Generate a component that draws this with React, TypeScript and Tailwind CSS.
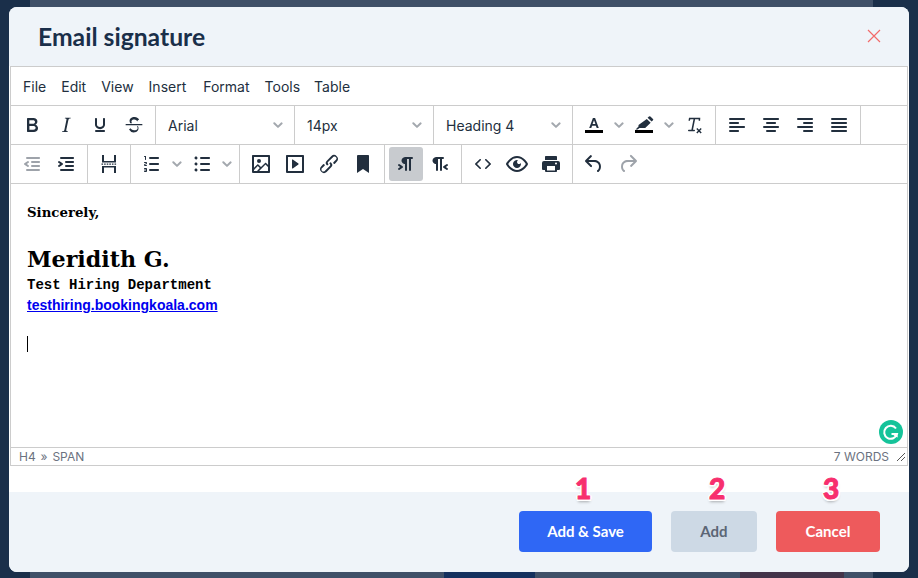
import { ReactNode } from "react";

const DARK = "#222f3e";

function Chevron() {
  return (
    <svg width="10" height="6" viewBox="0 0 10 6" className="block">
      <path d="M.6.6a1 1 0 0 1 1.4 0L5 3.6 8 .6a1 1 0 0 1 1.4 1.4L5.7 5.6a1 1 0 0 1-1.4 0L.6 2A1 1 0 0 1 .6.6z" fill="#a3a8ae" />
    </svg>
  );
}

function Icon({ d, color = DARK, bar }: { d: string; color?: string; bar?: boolean }) {
  return (
    <svg width="24" height="24" viewBox="0 0 24 24">
      <path d={d} fill={color} fillRule="evenodd" />
      {bar && <rect x="3" y="17" width="18" height="3" fill="#000" />}
    </svg>
  );
}

function Btn({ children, active }: { children: ReactNode; active?: boolean }) {
  return (
    <div className={`flex h-[34px] w-[34px] shrink-0 items-center justify-center rounded-[3px] ${active ? "bg-[#c8cbcf]" : ""}`}>
      {children}
    </div>
  );
}

function Split({ children }: { children: ReactNode }) {
  return (
    <div className="flex items-center">
      <Btn>{children}</Btn>
      <div className="flex h-[34px] w-[16px] items-center justify-center">
        <Chevron />
      </div>
    </div>
  );
}

function Group({ children, w }: { children: ReactNode; w: string }) {
  return <div className={`flex h-full shrink-0 items-center border-r border-[#ccc] pl-1 ${w}`}>{children}</div>;
}

function Select({ label }: { label: string }) {
  return (
    <div className="flex h-full w-[139px] shrink-0 items-center justify-between border-r border-[#ccc] pl-[12px] pr-[11px] text-[14px] text-[#222f3e]">
      <span>{label}</span>
      <Chevron />
    </div>
  );
}

const icons = {
  bold: "M7.8 19c-.3 0-.5 0-.6-.2l-.2-.5V5.7c0-.2 0-.4.2-.5l.6-.2h5c1.5 0 2.7.3 3.5 1 .7.6 1.1 1.4 1.1 2.5a3 3 0 0 1-.6 1.9c-.4.6-1 1-1.6 1.2.4.1.9.3 1.3.6s.8.7 1 1.2c.4.4.5 1 .5 1.6 0 1.3-.4 2.3-1.3 3-.8.7-2.1 1-3.8 1H7.8zm5-8.3c.6 0 1.2-.1 1.6-.5.4-.3.6-.7.6-1.3 0-1.1-.8-1.7-2.3-1.7H9.3v3.5h3.4zm.5 6c.7 0 1.3-.1 1.7-.4.4-.4.6-.9.6-1.5s-.2-1-.7-1.4c-.4-.3-1-.4-2-.4H9.4v3.8h4z",
  italic: "M16.7 4.7l-.1.9h-.3c-.6 0-1 0-1.4.3-.3.3-.4.6-.5 1.1l-2.1 9.8v.6c0 .5.4.8 1.4.8h.2l-.2.8H8l.2-.8h.2c1.1 0 1.8-.5 2-1.5l2-9.8.1-.5c0-.6-.4-.8-1.4-.8h-.3l.2-.9h5.8z",
  underline: "M16 5c.6 0 1 .4 1 1v5.5a4 4 0 0 1-.4 1.8l-1 1.4a5.3 5.3 0 0 1-5.5 1 5 5 0 0 1-1.6-1c-.5-.4-.8-.9-1.1-1.4a4 4 0 0 1-.4-1.8V6c0-.6.4-1 1-1s1 .4 1 1v5.5c0 .3 0 .6.2 1l.6.7a3.3 3.3 0 0 0 2.2.8 3.4 3.4 0 0 0 2.2-.8c.3-.2.4-.5.6-.8l.2-.9V6c0-.6.4-1 1-1zM8 17h8c.6 0 1 .4 1 1s-.4 1-1 1H8a1 1 0 0 1 0-2z",
  strike: "M15.6 8.5c-.5-.7-1-1.1-1.3-1.3-.6-.4-1.3-.6-2-.6-2.7 0-2.8 1.7-2.8 2.1 0 .6.2 1.1.6 1.5H8.3a3.5 3.5 0 0 1-.7-2c0-1.4.7-4.1 5-4.1 1.1 0 2.1.3 3 .8.7.4 1.2 1 1.6 1.7l-1.6.8zM4 11h16a.7.7 0 0 1 0 1.3H4A.7.7 0 0 1 4 11zm12 2.3c.4.7.5 1.4.5 2 0 1.4-.7 4.1-5 4.1A6.2 6.2 0 0 1 7 16.4l1.5-1.1c.4.6 1.6 2 3.7 2 1.6 0 2.5-.4 3-1 .3-.4.4-.9.4-1.3 0-.7-.3-1.2-.8-1.7H16z",
  outdent: "M7 5h12c.6 0 1 .4 1 1s-.4 1-1 1H7a1 1 0 1 1 0-2zm5 4h7c.6 0 1 .4 1 1s-.4 1-1 1h-7a1 1 0 0 1 0-2zm0 4h7c.6 0 1 .4 1 1s-.4 1-1 1h-7a1 1 0 0 1 0-2zm-5 4h12a1 1 0 0 1 0 2H7a1 1 0 0 1 0-2zm1.6-3.8a1 1 0 0 1-1.2 1.6l-3-2a1 1 0 0 1 0-1.6l3-2a1 1 0 0 1 1.2 1.6L6.8 12l1.8 1.2z",
  indent: "M7 5h12c.6 0 1 .4 1 1s-.4 1-1 1H7a1 1 0 1 1 0-2zm5 4h7c.6 0 1 .4 1 1s-.4 1-1 1h-7a1 1 0 0 1 0-2zm0 4h7c.6 0 1 .4 1 1s-.4 1-1 1h-7a1 1 0 0 1 0-2zm-5 4h12a1 1 0 0 1 0 2H7a1 1 0 0 1 0-2zm-2.6-3.8L6.2 12l-1.8-1.2a1 1 0 0 1 1.2-1.6l3 2a1 1 0 0 1 0 1.6l-3 2a1 1 0 1 1-1.2-1.6z",
  pagebreak: "M5 3h2v6h10V3h2v7.5H5zM5 14h14v7h-2v-5.5H7V21H5zM4.5 11.6h1.6v1.2H4.5zm2.6 0h1.6v1.2H7.1zm2.6 0h1.6v1.2H9.7zm2.6 0h1.6v1.2h-1.6zm2.6 0h1.6v1.2h-1.6zm2.6 0h1.6v1.2h-1.6z",
  numlist: "M10 17h8c.6 0 1 .4 1 1s-.4 1-1 1h-8a1 1 0 0 1 0-2zm0-6h8c.6 0 1 .4 1 1s-.4 1-1 1h-8a1 1 0 0 1 0-2zm0-6h8c.6 0 1 .4 1 1s-.4 1-1 1h-8a1 1 0 1 1 0-2zM6 4v3.5c0 .3-.2.5-.5.5a.5.5 0 0 1-.5-.5V5h-.5a.5.5 0 0 1 0-1H6zm-1 8.8l.2.2h1.3c.3 0 .5.2.5.5s-.2.5-.5.5H4.9a1 1 0 0 1-.9-1V13c0-.4.3-.8.6-1l1.2-.4.2-.3a.2.2 0 0 0-.2-.2H4.5a.5.5 0 0 1-.5-.5c0-.3.2-.5.5-.5h1.6c.5 0 .9.4.9 1v.1c0 .4-.3.8-.6 1l-1.2.4-.2.3zM7 17v2c0 .6-.4 1-1 1H4.5a.5.5 0 0 1 0-1h1.2c.2 0 .3-.1.3-.3 0-.2-.1-.3-.3-.3H4.4a.4.4 0 1 1 0-.8h1.3c.2 0 .3-.1.3-.3 0-.2-.1-.3-.3-.3H4.5a.5.5 0 1 1 0-1H6c.6 0 1 .4 1 1z",
  bullist: "M11 5h8c.6 0 1 .4 1 1s-.4 1-1 1h-8a1 1 0 0 1 0-2zm0 6h8c.6 0 1 .4 1 1s-.4 1-1 1h-8a1 1 0 0 1 0-2zm0 6h8c.6 0 1 .4 1 1s-.4 1-1 1h-8a1 1 0 0 1 0-2zM4.5 6c0-.4.1-.8.4-1 .3-.4.7-.5 1.1-.5.4 0 .8.1 1 .4.4.3.5.7.5 1.1 0 .4-.1.8-.4 1-.3.4-.7.5-1.1.5-.4 0-.8-.1-1-.4-.4-.3-.5-.7-.5-1.1zm0 6c0-.4.1-.8.4-1 .3-.4.7-.5 1.1-.5.4 0 .8.1 1 .4.4.3.5.7.5 1.1 0 .4-.1.8-.4 1-.3.4-.7.5-1.1.5-.4 0-.8-.1-1-.4-.4-.3-.5-.7-.5-1.1zm0 6c0-.4.1-.8.4-1 .3-.4.7-.5 1.1-.5.4 0 .8.1 1 .4.4.3.5.7.5 1.1 0 .4-.1.8-.4 1-.3.4-.7.5-1.1.5-.4 0-.8-.1-1-.4-.4-.3-.5-.7-.5-1.1z",
  image: "M5 15.7l3.3-3.2c.3-.3.7-.3 1 0L12 15l4.1-4c.3-.4.8-.4 1 0l2 1.9V5H5v10.7zM5 18V19h3l2.8-2.9-2-2L5 17.9zm14-3l-2.5-2.4-6.4 6.5H19v-4zM4 3h16c.6 0 1 .4 1 1v16c0 .6-.4 1-1 1H4a1 1 0 0 1-1-1V4c0-.6.4-1 1-1zm6 8a2 2 0 1 0 0-4 2 2 0 0 0 0 4z",
  media: "M4 3h16c.6 0 1 .4 1 1v16c0 .6-.4 1-1 1H4a1 1 0 0 1-1-1V4c0-.6.4-1 1-1zm1 2v14h14V5H5zm4.8 2.6l5.6 4a.5.5 0 0 1 0 .8l-5.6 4A.5.5 0 0 1 9 16V8a.5.5 0 0 1 .8-.4z",
  link: "M6.2 12.3a1 1 0 0 1 1.4 1.4l-2.1 2.1a2 2 0 1 0 2.7 2.7l4.8-4.8a1 1 0 0 0 0-1.4 1 1 0 1 1 1.4-1.3 2.9 2.9 0 0 1 0 4L9.6 20a3.9 3.9 0 0 1-5.5-5.5l2-2.2zm11.6-.6a1 1 0 0 1-1.4-1.4l2-2a2 2 0 1 0-2.6-2.8L11 10a1 1 0 0 0 0 1.4A1 1 0 1 1 9.6 13a2.9 2.9 0 0 1 0-4L14.4 4a3.9 3.9 0 0 1 5.5 5.5l-2 2.2z",
  bookmark: "M6 4v17l6-4 6 4V4c0-.6-.4-1-1-1H7a1 1 0 0 0-1 1z",
  ltr: "M11 5h7a1 1 0 0 1 0 2h-1v11a1 1 0 0 1-2 0V7h-2v11a1 1 0 0 1-2 0v-6c-.5 0-1 0-1.4-.3A3.4 3.4 0 0 1 7.8 10a3.3 3.3 0 0 1 0-2.8 3.4 3.4 0 0 1 1.8-1.8L11 5zM4.4 16.2L6.2 15l-1.8-1.2a1 1 0 0 1 1.2-1.6l3 2a1 1 0 0 1 0 1.6l-3 2a1 1 0 1 1-1.2-1.6z",
  rtl: "M8 5h7a1 1 0 0 1 0 2h-1v11a1 1 0 0 1-2 0V7h-2v11a1 1 0 0 1-2 0v-6c-.5 0-1 0-1.4-.3A3.4 3.4 0 0 1 4.8 10a3.3 3.3 0 0 1 0-2.8 3.4 3.4 0 0 1 1.8-1.8L8 5zM19.6 13.8L17.8 15l1.8 1.2a1 1 0 1 1-1.2 1.6l-3-2a1 1 0 0 1 0-1.6l3-2a1 1 0 0 1 1.2 1.6z",
  code: "M9.8 15.7c.3.3.3.8 0 1-.3.4-.9.4-1.2 0l-4.4-4.1a.8.8 0 0 1 0-1.2l4.4-4.2c.3-.3.9-.3 1.2 0 .3.3.3.8 0 1.1L6 12l3.8 3.7zm4.4 0l3.8-3.7-3.8-3.7a.8.8 0 0 1 0-1.1c.3-.3.9-.3 1.2 0l4.4 4.2c.3.3.3.9 0 1.2l-4.4 4.1c-.3.4-.9.4-1.2 0a.8.8 0 0 1 0-1z",
  preview: "M3.5 12.5c.5.8 1.1 1.6 1.8 2.3 2 2 4.2 3.2 6.7 3.2s4.7-1.2 6.7-3.2a16.2 16.2 0 0 0 2.1-2.8 15.7 15.7 0 0 0-2.1-2.8c-2-2-4.2-3.2-6.7-3.2a9.3 9.3 0 0 0-6.7 3.2A16.2 16.2 0 0 0 3.2 12c0 .2.2.3.3.5zm-2.4-1l.7-1.2L4 7.8C6.2 5.4 8.9 4 12 4c3 0 5.8 1.4 8.1 3.8a18.2 18.2 0 0 1 2.8 3.7v1l-.7 1.2-2.1 2.5c-2.3 2.4-5 3.8-8.1 3.8-3 0-5.8-1.4-8.1-3.8a18.2 18.2 0 0 1-2.8-3.7 1 1 0 0 1 0-1zm12-3.3a2 2 0 1 0 2.7 2.7 4 4 0 1 1-2.7-2.7z",
  print: "M18 8H6V5c0-.6.4-1 1-1h10c.6 0 1 .4 1 1v3zM5 9h14a2 2 0 0 1 2 2v6a1 1 0 0 1-1 1h-2v1c0 .6-.4 1-1 1H7a1 1 0 0 1-1-1v-1H4a1 1 0 0 1-1-1v-6a2 2 0 0 1 2-2zm3 5v4.5h8V14H8zm9-3.5a1 1 0 1 0 0 2 1 1 0 0 0 0-2z",
  undo: "M6.4 8H12c3.7 0 6.2 2 6.8 5.1.6 2.7-.4 5.6-2.3 6.8a1 1 0 0 1-1-1.8c1.1-.6 1.8-2.7 1.4-4.6-.5-2.1-2.1-3.5-4.9-3.5H6.4l3.3 3.3a1 1 0 1 1-1.4 1.4l-5-5a1 1 0 0 1 0-1.4l5-5a1 1 0 0 1 1.4 1.4L6.4 8z",
  redo: "M17.6 10H12c-2.8 0-4.4 1.4-4.9 3.5-.4 2 .3 4 1.4 4.6a1 1 0 1 1-1 1.8c-2-1.2-2.9-4.1-2.3-6.8.6-3 3-5.1 6.8-5.1h5.6l-3.3-3.3a1 1 0 1 1 1.4-1.4l5 5a1 1 0 0 1 0 1.4l-5 5a1 1 0 0 1-1.4-1.4l3.3-3.3z",
  alignLeft: "M5 5h14c.6 0 1 .4 1 1s-.4 1-1 1H5a1 1 0 1 1 0-2zm0 4h8c.6 0 1 .4 1 1s-.4 1-1 1H5a1 1 0 1 1 0-2zm0 8h8c.6 0 1 .4 1 1s-.4 1-1 1H5a1 1 0 0 1 0-2zm0-4h14c.6 0 1 .4 1 1s-.4 1-1 1H5a1 1 0 0 1 0-2z",
  alignCenter: "M5 5h14c.6 0 1 .4 1 1s-.4 1-1 1H5a1 1 0 1 1 0-2zm3 4h8c.6 0 1 .4 1 1s-.4 1-1 1H8a1 1 0 1 1 0-2zm0 8h8c.6 0 1 .4 1 1s-.4 1-1 1H8a1 1 0 0 1 0-2zm-3-4h14c.6 0 1 .4 1 1s-.4 1-1 1H5a1 1 0 0 1 0-2z",
  alignRight: "M5 5h14c.6 0 1 .4 1 1s-.4 1-1 1H5a1 1 0 1 1 0-2zm6 4h8c.6 0 1 .4 1 1s-.4 1-1 1h-8a1 1 0 0 1 0-2zm0 8h8c.6 0 1 .4 1 1s-.4 1-1 1h-8a1 1 0 0 1 0-2zm-6-4h14c.6 0 1 .4 1 1s-.4 1-1 1H5a1 1 0 0 1 0-2z",
  justify: "M5 5h14c.6 0 1 .4 1 1s-.4 1-1 1H5a1 1 0 1 1 0-2zm0 4h14c.6 0 1 .4 1 1s-.4 1-1 1H5a1 1 0 1 1 0-2zm0 4h14c.6 0 1 .4 1 1s-.4 1-1 1H5a1 1 0 0 1 0-2zm0 4h14c.6 0 1 .4 1 1s-.4 1-1 1H5a1 1 0 0 1 0-2z",
  textColor: "M10.9 5h2.2l3.7 10h-2.1l-.8-2.3h-3.8L9.3 15H7.2l3.7-10zm-.3 6.1h2.800L12 7.300l-1.400 3.800z",
  highlight: "M17 3.500a1 1 0 0 1 1.400 0l2.600 2.400a1 1 0 0 1 0 1.400l-1.400 1.300-4-3.800L17 3.500zM14.800 6l3.900 3.700-5.500 5.300H7.500l-2 1.500H3.600l2.900-3V12l8.300-6z",
  clear: "M13.100 6.200L11 16.800h1.300a.7.7 0 0 1 0 1.400H6.700a.7.7 0 0 1 0-1.400h2.700l2.100-10.600H8.300l-.4 1.500H6.500L7 4.700h11.300l-.2 3h-1.400l-.1-1.500h-3.500zM15.300 15l1.700 1.700 1.700-1.700 1 1-1.700 1.700 1.700 1.700-1 1-1.700-1.700-1.700 1.700-1-1 1.700-1.700-1.700-1.700z",
};

function ActionButton({ label, className }: { label: string; className: string }) {
  return (
    <div className={`flex h-[41px] items-center justify-center rounded-[4px] text-[15px] font-bold ${className}`}>{label}</div>
  );
}

function Mark({ n, className }: { n: string; className: string }) {
  return (
    <span
      className={`absolute top-[-37px] -translate-x-1/2 text-[28px] leading-none font-black text-[#f72f6e] [-webkit-text-stroke:1px_#f72f6e] [font-family:Lato,sans-serif] [text-shadow:2px_0_0_#fff,-2px_0_0_#fff,0_2px_0_#fff,0_-2px_0_#fff,1.5px_1.5px_0_#fff,-1.5px_-1.5px_0_#fff,1.5px_-1.5px_0_#fff,-1.5px_1.5px_0_#fff,0_3px_3px_rgba(0,0,0,0.3)] ${className}`}
    >
      {n}
    </span>
  );
}

export default function App() {
  return (
    <div className="relative h-[578px] w-[918px] overflow-hidden bg-[#3f5068] [font-family:Inter,sans-serif]">
      {/* page behind the modal */}
      <div className="flex h-full w-full">
        <div className="h-full w-[30px] bg-[#1a2f4a]" />
        <div className="flex h-full flex-1 items-end">
          <div className="ml-[414px] h-[6px] w-[91px] bg-[#14305e]" />
          <div className="ml-auto h-[6px] w-[104px] bg-[#43344a]" />
          <div className="w-[29px]" />
        </div>
        <div className="h-full w-[45px] bg-[#1a2f4a]" />
      </div>

      <div className="absolute left-[9px] top-[7px] flex h-[565px] w-[900px] flex-col overflow-hidden rounded-[8px] bg-white">
        <div className="flex h-[59px] shrink-0 items-center justify-between bg-[#eff4f9] pl-[29px] pr-[27px]">
          <h2 className="text-[24.7px] font-bold text-[#1a2f4a] [font-family:Lato,sans-serif]">Email signature</h2>
          <svg width="16" height="16" viewBox="0 0 16 16" className="-mt-[2px]">
            <path d="M2 2l12 12M14 2L2 14" stroke="#f26a6a" strokeWidth="1.2" />
          </svg>
        </div>

        {/* editor */}
        <div className="mx-px flex h-[400px] shrink-0 flex-col border border-[#ccc]">
          <div className="flex h-[39px] shrink-0 items-center gap-[15px] border-b border-[#ccc] pl-[12px] text-[14px] text-[#222f3e]">
            <span>File</span>
            <span>Edit</span>
            <span>View</span>
            <span>Insert</span>
            <span className="ml-[2px]">Format</span>
            <span>Tools</span>
            <span className="-ml-px">Table</span>
          </div>

          <div className="flex h-[39px] shrink-0 items-center border-b border-[#ccc]">
            <Group w="w-[145px]">
              <Btn><Icon d={icons.bold} /></Btn>
              <Btn><Icon d={icons.italic} /></Btn>
              <Btn><Icon d={icons.underline} /></Btn>
              <Btn><Icon d={icons.strike} /></Btn>
            </Group>
            <Select label="Arial" />
            <Select label="14px" />
            <Select label="Heading 4" />
            <Group w="w-[143px]">
              <Split><Icon d={icons.textColor} bar /></Split>
              <Split><Icon d={icons.highlight} bar /></Split>
              <Btn><Icon d={icons.clear} /></Btn>
            </Group>
            <Group w="w-[145px]">
              <Btn><Icon d={icons.alignLeft} /></Btn>
              <Btn><Icon d={icons.alignCenter} /></Btn>
              <Btn><Icon d={icons.alignRight} /></Btn>
              <Btn><Icon d={icons.justify} /></Btn>
            </Group>
          </div>

          <div className="flex h-[39px] shrink-0 items-center border-b border-[#ccc]">
            <Group w="w-[77px]">
              <Btn><Icon d={icons.outdent} color="#9ea3aa" /></Btn>
              <Btn><Icon d={icons.indent} /></Btn>
            </Group>
            <Group w="w-[43px]">
              <Btn><Icon d={icons.pagebreak} /></Btn>
            </Group>
            <Group w="w-[109px]">
              <Split><Icon d={icons.numlist} /></Split>
              <Split><Icon d={icons.bullist} /></Split>
            </Group>
            <Group w="w-[145px]">
              <Btn><Icon d={icons.image} /></Btn>
              <Btn><Icon d={icons.media} /></Btn>
              <Btn><Icon d={icons.link} /></Btn>
              <Btn><Icon d={icons.bookmark} /></Btn>
            </Group>
            <Group w="w-[77px]">
              <Btn active><Icon d={icons.ltr} /></Btn>
              <Btn><Icon d={icons.rtl} /></Btn>
            </Group>
            <Group w="w-[111px]">
              <Btn><Icon d={icons.code} /></Btn>
              <Btn><Icon d={icons.preview} /></Btn>
              <Btn><Icon d={icons.print} /></Btn>
            </Group>
            <div className="flex h-full items-center pl-1">
              <Btn><Icon d={icons.undo} /></Btn>
              <Btn><Icon d={icons.redo} color="#9ea3aa" /></Btn>
            </div>
          </div>

          {/* content */}
          <div className="relative min-h-0 flex-1 px-[16px] pt-[21px] text-black">
            <p className="text-[13.3px] font-bold leading-[16px] [font-family:'DejaVu_Serif',serif]">Sincerely,</p>
            <p className="mt-[23px] text-[22.2px] font-bold leading-[30px] [font-family:'DejaVu_Serif',serif]">Meridith G.</p>
            <p className="mt-[2px] text-[14px] font-bold leading-[18px] [font-family:'Liberation_Mono',monospace]">Test Hiring Department</p>
            <p className="mt-[2px] text-[14px] font-bold leading-[18px] text-[#0000ee] underline [font-family:'Liberation_Sans',sans-serif]">testhiring.bookingkoala.com</p>
            <div className="mt-[22px] h-[16px] w-px bg-black" />
            <svg width="24" height="24" viewBox="0 0 24 24" className="absolute bottom-[3px] right-[4px]">
              <circle cx="12" cy="12" r="12" fill="#15c39a" />
              <path d="M17 8.5A6.5 6.5 0 1 0 18 14h-5.5" fill="none" stroke="#fff" strokeWidth="2" />
              <path d="M14.5 15.5l3.8-2.3.5 4.2z" fill="#fff" />
            </svg>
          </div>

          <div className="flex h-[18px] shrink-0 items-center justify-between border-t border-[#ccc] pl-[8px] pr-[1px] text-[12px] text-[#6b7280]">
            <span className="[word-spacing:1.5px]">H4 » SPAN</span>
            <div className="flex items-center gap-[7px]">
              <span>7 WORDS</span>
              <svg width="10" height="10" viewBox="0 0 10 10">
                <path d="M1 9l8-8M5 9l4-4" stroke="#555" strokeWidth="1" />
              </svg>
            </div>
          </div>
        </div>

        <div className="h-[26px] shrink-0" />

        <div className="relative flex flex-1 items-start justify-end gap-[19px] bg-[#eff4f9] pr-[29px] pt-[19px] [font-family:Lato,sans-serif]">
          <div className="relative w-[133px]">
            <Mark n="1" className="left-[64px]" />
            <ActionButton label="Add & Save" className="bg-[#2f67f5] text-white" />
          </div>
          <div className="relative w-[86px]">
            <Mark n="2" className="left-[46px]" />
            <ActionButton label="Add" className="bg-[#cdd9e5] text-[#5b6675]" />
          </div>
          <div className="relative w-[104px]">
            <Mark n="3" className="left-[55px]" />
            <ActionButton label="Cancel" className="bg-[#ee5a5c] text-white" />
          </div>
        </div>
      </div>
    </div>
  );
}
